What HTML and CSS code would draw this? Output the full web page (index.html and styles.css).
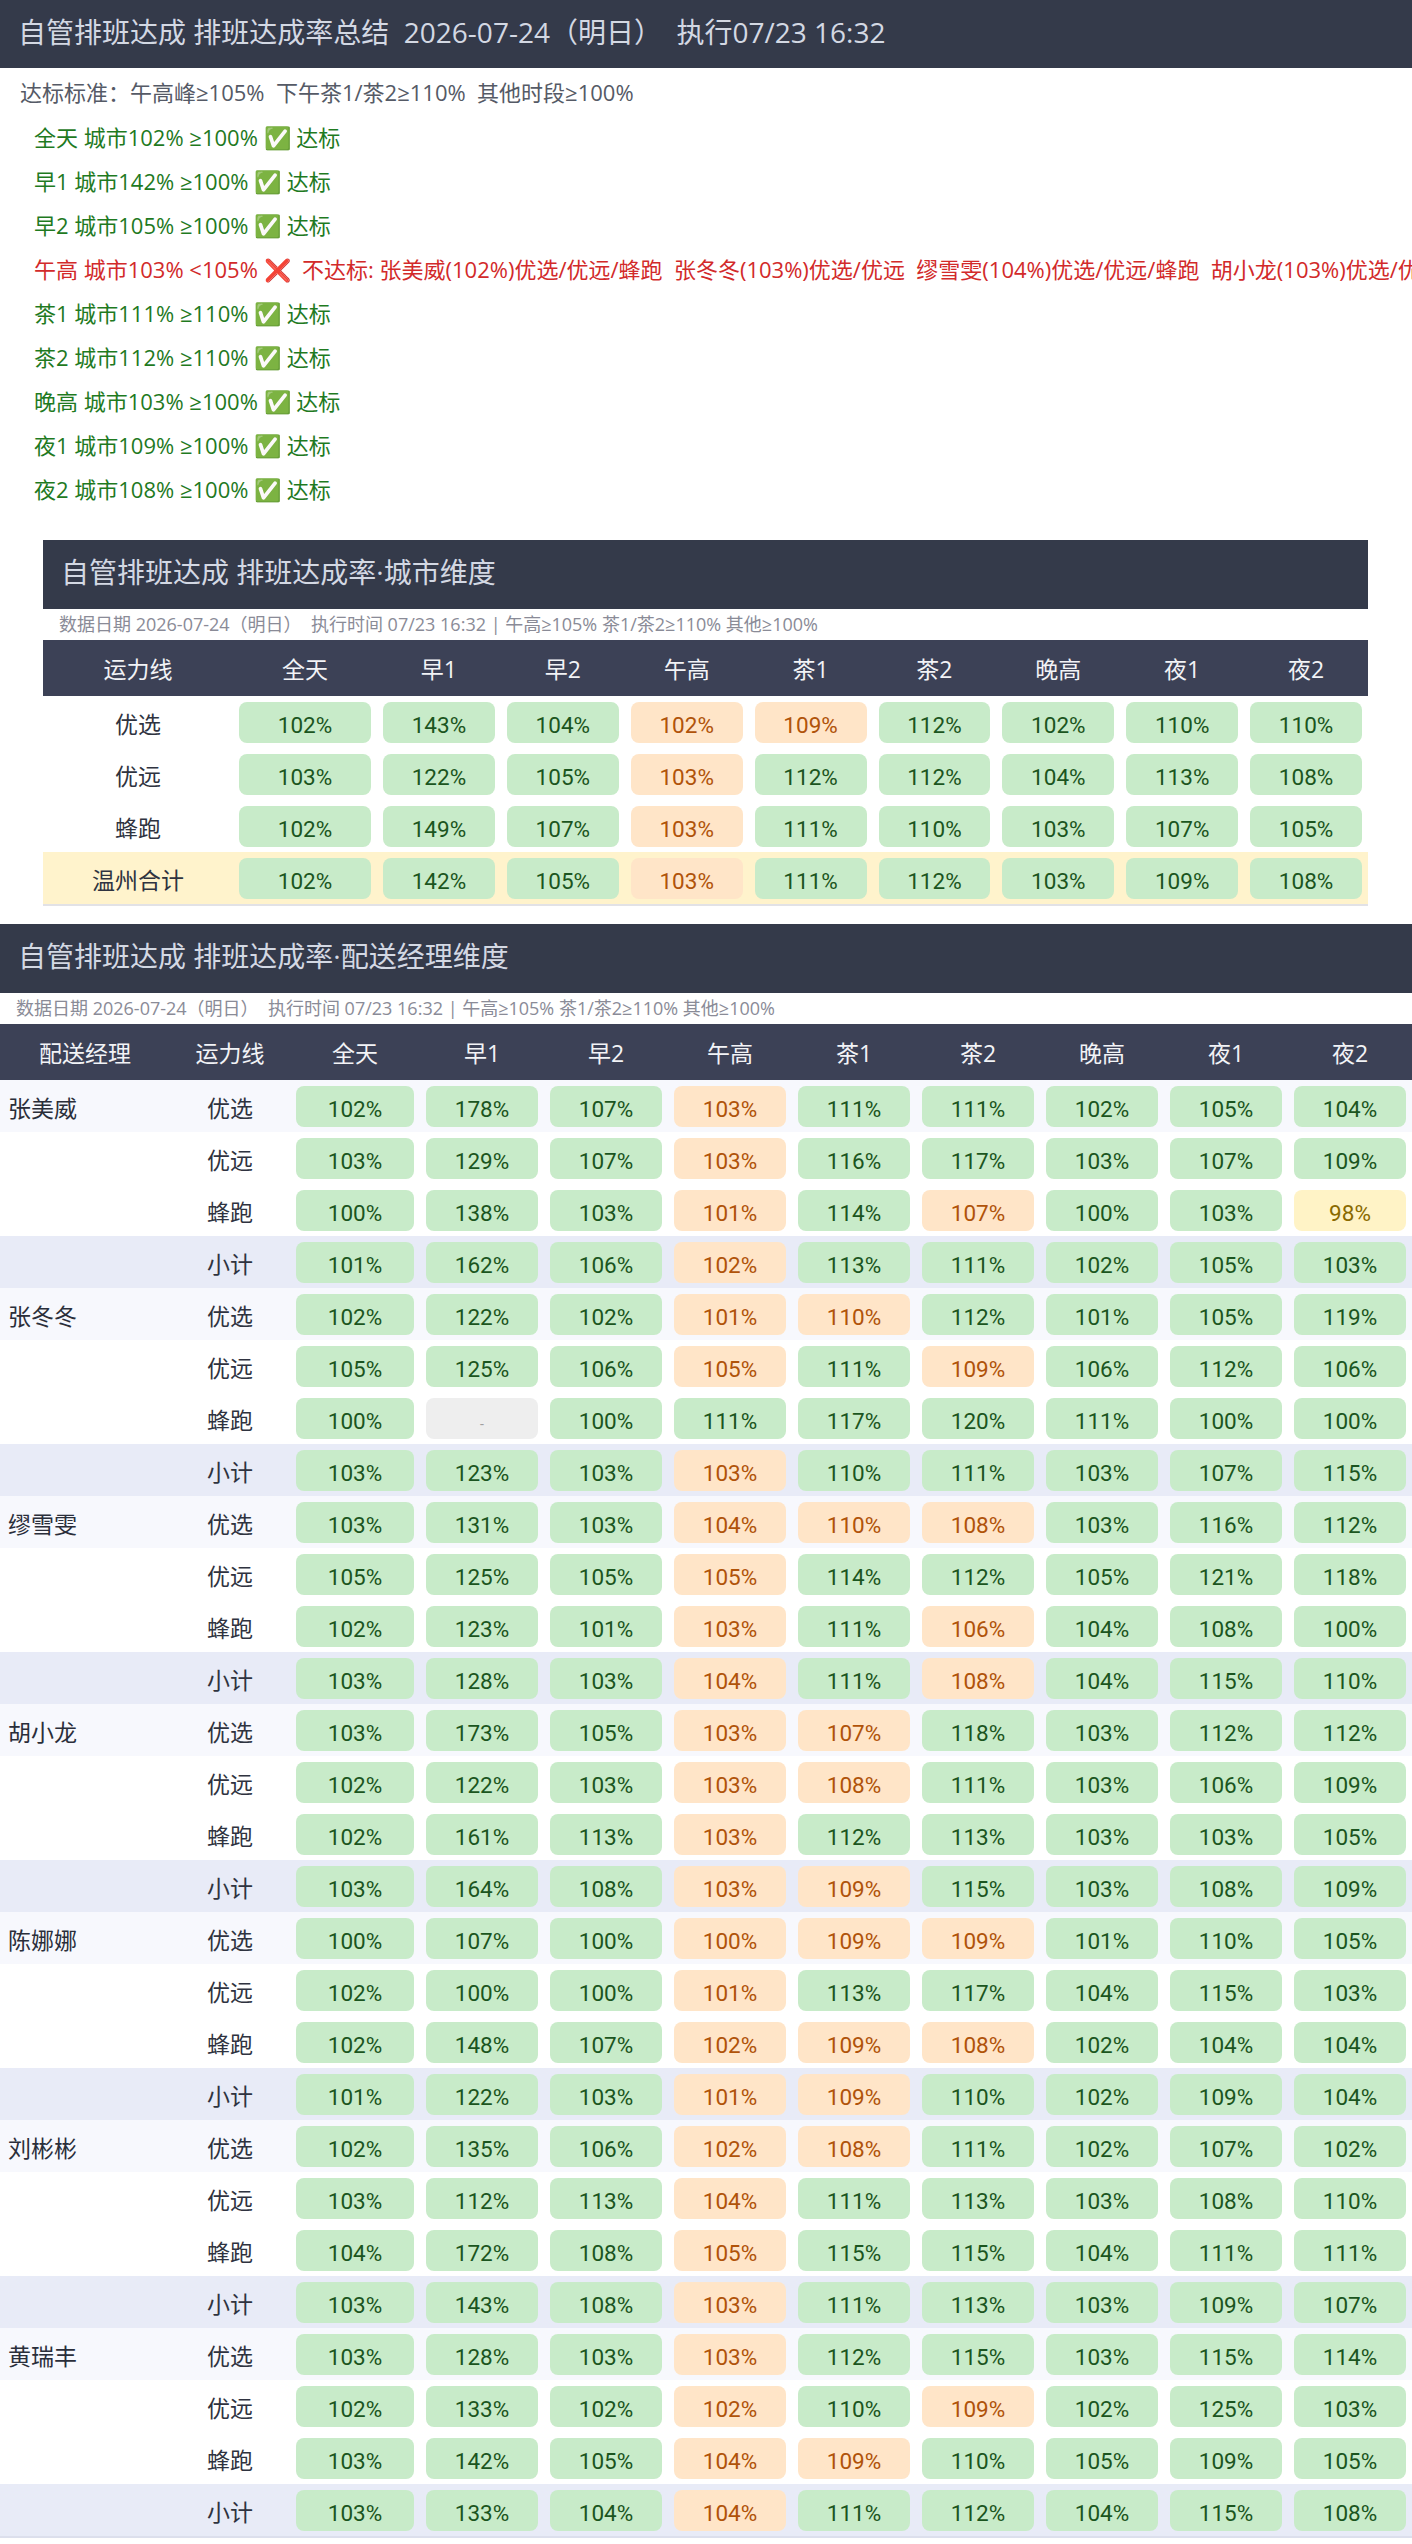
FILE: index.html
```html
<!DOCTYPE html>
<html lang="zh-CN">
<head>
<meta charset="utf-8">
<title>自管排班达成 排班达成率总结</title>
<link rel="stylesheet" href="styles.css">
</head>
<body>
<header class="topbar">自管排班达成 排班达成率总结  2026-07-24（明日）  执行07/23 16:32</header>

<section class="summary">
  <div class="std">达标标准：午高峰≥105%  下午茶1/茶2≥110%  其他时段≥100%</div>
  <div class="checks">
    <div class="check ok">全天 城市102% ≥100% ✅ 达标</div>
    <div class="check ok">早1 城市142% ≥100% ✅ 达标</div>
    <div class="check ok">早2 城市105% ≥100% ✅ 达标</div>
    <div class="check bad">午高 城市103% &lt;105% ❌  不达标: 张美威(102%)优选/优远/蜂跑  张冬冬(103%)优选/优远  缪雪雯(104%)优选/优远/蜂跑  胡小龙(103%)优选/优远/蜂跑  陈娜娜(101%)优选/优远/蜂跑  刘彬彬(103%)优选/优远  黄瑞丰(104%)优选/优远/蜂跑</div>
    <div class="check ok">茶1 城市111% ≥110% ✅ 达标</div>
    <div class="check ok">茶2 城市112% ≥110% ✅ 达标</div>
    <div class="check ok">晚高 城市103% ≥100% ✅ 达标</div>
    <div class="check ok">夜1 城市109% ≥100% ✅ 达标</div>
    <div class="check ok">夜2 城市108% ≥100% ✅ 达标</div>
  </div>
</section>

<section class="city">
  <div class="sec-title">自管排班达成 排班达成率·城市维度</div>
  <div class="sec-sub">数据日期 2026-07-24（明日）  执行时间 07/23 16:32 | 午高≥105% 茶1/茶2≥110% 其他≥100%</div>
  <table class="grid city-grid">
    <colgroup><col class="c-line-w"><col class="c-all-w"><col><col><col><col><col><col><col><col></colgroup>
    <thead><tr><th>运力线</th><th>全天</th><th>早1</th><th>早2</th><th>午高</th><th>茶1</th><th>茶2</th><th>晚高</th><th>夜1</th><th>夜2</th></tr></thead>
    <tbody>
      <tr><td class="lbl">优选</td><td><span class="pill g">102%</span></td><td><span class="pill g">143%</span></td><td><span class="pill g">104%</span></td><td><span class="pill o">102%</span></td><td><span class="pill o">109%</span></td><td><span class="pill g">112%</span></td><td><span class="pill g">102%</span></td><td><span class="pill g">110%</span></td><td><span class="pill g">110%</span></td></tr>
      <tr><td class="lbl">优远</td><td><span class="pill g">103%</span></td><td><span class="pill g">122%</span></td><td><span class="pill g">105%</span></td><td><span class="pill o">103%</span></td><td><span class="pill g">112%</span></td><td><span class="pill g">112%</span></td><td><span class="pill g">104%</span></td><td><span class="pill g">113%</span></td><td><span class="pill g">108%</span></td></tr>
      <tr><td class="lbl">蜂跑</td><td><span class="pill g">102%</span></td><td><span class="pill g">149%</span></td><td><span class="pill g">107%</span></td><td><span class="pill o">103%</span></td><td><span class="pill g">111%</span></td><td><span class="pill g">110%</span></td><td><span class="pill g">103%</span></td><td><span class="pill g">107%</span></td><td><span class="pill g">105%</span></td></tr>
      <tr class="total"><td class="lbl">温州合计</td><td><span class="pill g">102%</span></td><td><span class="pill g">142%</span></td><td><span class="pill g">105%</span></td><td><span class="pill o">103%</span></td><td><span class="pill g">111%</span></td><td><span class="pill g">112%</span></td><td><span class="pill g">103%</span></td><td><span class="pill g">109%</span></td><td><span class="pill g">108%</span></td></tr>
    </tbody>
  </table>
</section>

<section class="mgr">
  <div class="sec-title">自管排班达成 排班达成率·配送经理维度</div>
  <div class="sec-sub">数据日期 2026-07-24（明日）  执行时间 07/23 16:32 | 午高≥105% 茶1/茶2≥110% 其他≥100%</div>
  <table class="grid mgr-grid">
    <colgroup><col class="m-name-w"><col class="m-line-w"><col class="m-all-w"><col><col><col><col><col><col><col><col></colgroup>
    <thead><tr><th>配送经理</th><th>运力线</th><th>全天</th><th>早1</th><th>早2</th><th>午高</th><th>茶1</th><th>茶2</th><th>晚高</th><th>夜1</th><th>夜2</th></tr></thead>
    <tbody>
      <tr class="first"><td class="name">张美威</td><td class="lbl">优选</td><td><span class="pill g">102%</span></td><td><span class="pill g">178%</span></td><td><span class="pill g">107%</span></td><td><span class="pill o">103%</span></td><td><span class="pill g">111%</span></td><td><span class="pill g">111%</span></td><td><span class="pill g">102%</span></td><td><span class="pill g">105%</span></td><td><span class="pill g">104%</span></td></tr>
      <tr><td></td><td class="lbl">优远</td><td><span class="pill g">103%</span></td><td><span class="pill g">129%</span></td><td><span class="pill g">107%</span></td><td><span class="pill o">103%</span></td><td><span class="pill g">116%</span></td><td><span class="pill g">117%</span></td><td><span class="pill g">103%</span></td><td><span class="pill g">107%</span></td><td><span class="pill g">109%</span></td></tr>
      <tr><td></td><td class="lbl">蜂跑</td><td><span class="pill g">100%</span></td><td><span class="pill g">138%</span></td><td><span class="pill g">103%</span></td><td><span class="pill o">101%</span></td><td><span class="pill g">114%</span></td><td><span class="pill o">107%</span></td><td><span class="pill g">100%</span></td><td><span class="pill g">103%</span></td><td><span class="pill y">98%</span></td></tr>
      <tr class="sub"><td></td><td class="lbl">小计</td><td><span class="pill g">101%</span></td><td><span class="pill g">162%</span></td><td><span class="pill g">106%</span></td><td><span class="pill o">102%</span></td><td><span class="pill g">113%</span></td><td><span class="pill g">111%</span></td><td><span class="pill g">102%</span></td><td><span class="pill g">105%</span></td><td><span class="pill g">103%</span></td></tr>

      <tr class="first"><td class="name">张冬冬</td><td class="lbl">优选</td><td><span class="pill g">102%</span></td><td><span class="pill g">122%</span></td><td><span class="pill g">102%</span></td><td><span class="pill o">101%</span></td><td><span class="pill o">110%</span></td><td><span class="pill g">112%</span></td><td><span class="pill g">101%</span></td><td><span class="pill g">105%</span></td><td><span class="pill g">119%</span></td></tr>
      <tr><td></td><td class="lbl">优远</td><td><span class="pill g">105%</span></td><td><span class="pill g">125%</span></td><td><span class="pill g">106%</span></td><td><span class="pill o">105%</span></td><td><span class="pill g">111%</span></td><td><span class="pill o">109%</span></td><td><span class="pill g">106%</span></td><td><span class="pill g">112%</span></td><td><span class="pill g">106%</span></td></tr>
      <tr><td></td><td class="lbl">蜂跑</td><td><span class="pill g">100%</span></td><td><span class="pill n">-</span></td><td><span class="pill g">100%</span></td><td><span class="pill g">111%</span></td><td><span class="pill g">117%</span></td><td><span class="pill g">120%</span></td><td><span class="pill g">111%</span></td><td><span class="pill g">100%</span></td><td><span class="pill g">100%</span></td></tr>
      <tr class="sub"><td></td><td class="lbl">小计</td><td><span class="pill g">103%</span></td><td><span class="pill g">123%</span></td><td><span class="pill g">103%</span></td><td><span class="pill o">103%</span></td><td><span class="pill g">110%</span></td><td><span class="pill g">111%</span></td><td><span class="pill g">103%</span></td><td><span class="pill g">107%</span></td><td><span class="pill g">115%</span></td></tr>

      <tr class="first"><td class="name">缪雪雯</td><td class="lbl">优选</td><td><span class="pill g">103%</span></td><td><span class="pill g">131%</span></td><td><span class="pill g">103%</span></td><td><span class="pill o">104%</span></td><td><span class="pill o">110%</span></td><td><span class="pill o">108%</span></td><td><span class="pill g">103%</span></td><td><span class="pill g">116%</span></td><td><span class="pill g">112%</span></td></tr>
      <tr><td></td><td class="lbl">优远</td><td><span class="pill g">105%</span></td><td><span class="pill g">125%</span></td><td><span class="pill g">105%</span></td><td><span class="pill o">105%</span></td><td><span class="pill g">114%</span></td><td><span class="pill g">112%</span></td><td><span class="pill g">105%</span></td><td><span class="pill g">121%</span></td><td><span class="pill g">118%</span></td></tr>
      <tr><td></td><td class="lbl">蜂跑</td><td><span class="pill g">102%</span></td><td><span class="pill g">123%</span></td><td><span class="pill g">101%</span></td><td><span class="pill o">103%</span></td><td><span class="pill g">111%</span></td><td><span class="pill o">106%</span></td><td><span class="pill g">104%</span></td><td><span class="pill g">108%</span></td><td><span class="pill g">100%</span></td></tr>
      <tr class="sub"><td></td><td class="lbl">小计</td><td><span class="pill g">103%</span></td><td><span class="pill g">128%</span></td><td><span class="pill g">103%</span></td><td><span class="pill o">104%</span></td><td><span class="pill g">111%</span></td><td><span class="pill o">108%</span></td><td><span class="pill g">104%</span></td><td><span class="pill g">115%</span></td><td><span class="pill g">110%</span></td></tr>

      <tr class="first"><td class="name">胡小龙</td><td class="lbl">优选</td><td><span class="pill g">103%</span></td><td><span class="pill g">173%</span></td><td><span class="pill g">105%</span></td><td><span class="pill o">103%</span></td><td><span class="pill o">107%</span></td><td><span class="pill g">118%</span></td><td><span class="pill g">103%</span></td><td><span class="pill g">112%</span></td><td><span class="pill g">112%</span></td></tr>
      <tr><td></td><td class="lbl">优远</td><td><span class="pill g">102%</span></td><td><span class="pill g">122%</span></td><td><span class="pill g">103%</span></td><td><span class="pill o">103%</span></td><td><span class="pill o">108%</span></td><td><span class="pill g">111%</span></td><td><span class="pill g">103%</span></td><td><span class="pill g">106%</span></td><td><span class="pill g">109%</span></td></tr>
      <tr><td></td><td class="lbl">蜂跑</td><td><span class="pill g">102%</span></td><td><span class="pill g">161%</span></td><td><span class="pill g">113%</span></td><td><span class="pill o">103%</span></td><td><span class="pill g">112%</span></td><td><span class="pill g">113%</span></td><td><span class="pill g">103%</span></td><td><span class="pill g">103%</span></td><td><span class="pill g">105%</span></td></tr>
      <tr class="sub"><td></td><td class="lbl">小计</td><td><span class="pill g">103%</span></td><td><span class="pill g">164%</span></td><td><span class="pill g">108%</span></td><td><span class="pill o">103%</span></td><td><span class="pill o">109%</span></td><td><span class="pill g">115%</span></td><td><span class="pill g">103%</span></td><td><span class="pill g">108%</span></td><td><span class="pill g">109%</span></td></tr>

      <tr class="first"><td class="name">陈娜娜</td><td class="lbl">优选</td><td><span class="pill g">100%</span></td><td><span class="pill g">107%</span></td><td><span class="pill g">100%</span></td><td><span class="pill o">100%</span></td><td><span class="pill o">109%</span></td><td><span class="pill o">109%</span></td><td><span class="pill g">101%</span></td><td><span class="pill g">110%</span></td><td><span class="pill g">105%</span></td></tr>
      <tr><td></td><td class="lbl">优远</td><td><span class="pill g">102%</span></td><td><span class="pill g">100%</span></td><td><span class="pill g">100%</span></td><td><span class="pill o">101%</span></td><td><span class="pill g">113%</span></td><td><span class="pill g">117%</span></td><td><span class="pill g">104%</span></td><td><span class="pill g">115%</span></td><td><span class="pill g">103%</span></td></tr>
      <tr><td></td><td class="lbl">蜂跑</td><td><span class="pill g">102%</span></td><td><span class="pill g">148%</span></td><td><span class="pill g">107%</span></td><td><span class="pill o">102%</span></td><td><span class="pill o">109%</span></td><td><span class="pill o">108%</span></td><td><span class="pill g">102%</span></td><td><span class="pill g">104%</span></td><td><span class="pill g">104%</span></td></tr>
      <tr class="sub"><td></td><td class="lbl">小计</td><td><span class="pill g">101%</span></td><td><span class="pill g">122%</span></td><td><span class="pill g">103%</span></td><td><span class="pill o">101%</span></td><td><span class="pill o">109%</span></td><td><span class="pill g">110%</span></td><td><span class="pill g">102%</span></td><td><span class="pill g">109%</span></td><td><span class="pill g">104%</span></td></tr>

      <tr class="first"><td class="name">刘彬彬</td><td class="lbl">优选</td><td><span class="pill g">102%</span></td><td><span class="pill g">135%</span></td><td><span class="pill g">106%</span></td><td><span class="pill o">102%</span></td><td><span class="pill o">108%</span></td><td><span class="pill g">111%</span></td><td><span class="pill g">102%</span></td><td><span class="pill g">107%</span></td><td><span class="pill g">102%</span></td></tr>
      <tr><td></td><td class="lbl">优远</td><td><span class="pill g">103%</span></td><td><span class="pill g">112%</span></td><td><span class="pill g">113%</span></td><td><span class="pill o">104%</span></td><td><span class="pill g">111%</span></td><td><span class="pill g">113%</span></td><td><span class="pill g">103%</span></td><td><span class="pill g">108%</span></td><td><span class="pill g">110%</span></td></tr>
      <tr><td></td><td class="lbl">蜂跑</td><td><span class="pill g">104%</span></td><td><span class="pill g">172%</span></td><td><span class="pill g">108%</span></td><td><span class="pill o">105%</span></td><td><span class="pill g">115%</span></td><td><span class="pill g">115%</span></td><td><span class="pill g">104%</span></td><td><span class="pill g">111%</span></td><td><span class="pill g">111%</span></td></tr>
      <tr class="sub"><td></td><td class="lbl">小计</td><td><span class="pill g">103%</span></td><td><span class="pill g">143%</span></td><td><span class="pill g">108%</span></td><td><span class="pill o">103%</span></td><td><span class="pill g">111%</span></td><td><span class="pill g">113%</span></td><td><span class="pill g">103%</span></td><td><span class="pill g">109%</span></td><td><span class="pill g">107%</span></td></tr>

      <tr class="first"><td class="name">黄瑞丰</td><td class="lbl">优选</td><td><span class="pill g">103%</span></td><td><span class="pill g">128%</span></td><td><span class="pill g">103%</span></td><td><span class="pill o">103%</span></td><td><span class="pill g">112%</span></td><td><span class="pill g">115%</span></td><td><span class="pill g">103%</span></td><td><span class="pill g">115%</span></td><td><span class="pill g">114%</span></td></tr>
      <tr><td></td><td class="lbl">优远</td><td><span class="pill g">102%</span></td><td><span class="pill g">133%</span></td><td><span class="pill g">102%</span></td><td><span class="pill o">102%</span></td><td><span class="pill g">110%</span></td><td><span class="pill o">109%</span></td><td><span class="pill g">102%</span></td><td><span class="pill g">125%</span></td><td><span class="pill g">103%</span></td></tr>
      <tr><td></td><td class="lbl">蜂跑</td><td><span class="pill g">103%</span></td><td><span class="pill g">142%</span></td><td><span class="pill g">105%</span></td><td><span class="pill o">104%</span></td><td><span class="pill o">109%</span></td><td><span class="pill g">110%</span></td><td><span class="pill g">105%</span></td><td><span class="pill g">109%</span></td><td><span class="pill g">105%</span></td></tr>
      <tr class="sub"><td></td><td class="lbl">小计</td><td><span class="pill g">103%</span></td><td><span class="pill g">133%</span></td><td><span class="pill g">104%</span></td><td><span class="pill o">104%</span></td><td><span class="pill g">111%</span></td><td><span class="pill g">112%</span></td><td><span class="pill g">104%</span></td><td><span class="pill g">115%</span></td><td><span class="pill g">108%</span></td></tr>
    </tbody>
  </table>
</section>
</body>
</html>
```
FILE: styles.css
```css
html, body {
  margin: 0;
  padding: 0;
  background: #ffffff;
  overflow-x: hidden;
}
body {
  font-family: "Open Sans", "Noto Sans CJK SC", sans-serif;
  color: #333;
}

.topbar {
  background: #343a4a;
  color: #d3d8e3;
  font-size: 28px;
  height: 68px;
  line-height: 64px;
  padding-left: 18px;
  white-space: pre;
}

.summary {
  padding: 6px 0 0 20px;
}
.std {
  font-size: 22px;
  color: #555a66;
  line-height: 36px;
  white-space: pre;
}
.checks {
  margin-top: 5px;
  padding-left: 14px;
}
.check {
  font-size: 22px;
  line-height: 44px;
  white-space: pre;
}
.ok { color: #1f7a1f; }
.bad { color: #d22a2a; }

.city {
  margin: 29px 44px 0 43px;
}
.mgr {
  margin-top: 18px;
}

.sec-title {
  background: #343a4a;
  color: #d3d8e3;
  font-size: 28px;
  height: 69px;
  line-height: 64px;
  padding-left: 18px;
  white-space: nowrap;
}
.sec-sub {
  font-size: 18px;
  color: #8a8b97;
  height: 31px;
  line-height: 31px;
  padding-left: 16px;
  white-space: pre;
}

.grid {
  width: 100%;
  border-collapse: collapse;
  table-layout: fixed;
}
.city-grid { border-bottom: 2px solid #e2e2e6; }
.mgr-grid { border-bottom: 2px solid #dcdfec; }

.c-line-w { width: 190px; }
.c-all-w { width: 144px; }
.m-name-w { width: 170px; }
.m-line-w { width: 120px; }
.m-all-w { width: 130px; }

.grid th {
  background: #3c4156;
  color: #f2f3f6;
  font-weight: normal;
  font-size: 23px;
  height: 56px;
  padding: 0;
  text-align: center;
}
.grid td {
  padding: 6px 6px 5px;
  text-align: center;
  font-size: 23px;
  color: #333;
  height: 41px;
}
.grid td.lbl { color: #2f3340; }
.grid td.name {
  text-align: left;
  padding-left: 8px;
  color: #2a2e3a;
}

.grid tr.total td { background: #fff3cc; }
.grid tr.first td { background: #f7f8fd; }
.grid tr.sub td { background: #e8ebf7; }

.pill {
  display: block;
  height: 41px;
  box-sizing: border-box;
  padding-top: 6px;
  line-height: 35px;
  border-radius: 8px;
  font-family: Roboto, "Noto Sans CJK SC", sans-serif;
  font-size: 22.5px;
}
.pill.g { background: #c8ebc9; color: #1b5520; }
.pill.o { background: #ffe5c8; color: #b0530a; }
.pill.y { background: #fff3c6; color: #8a6a00; }
.pill.n { background: #eeeeee; color: #a0a0a0; font-size: 14px; line-height: 40px; }
```
